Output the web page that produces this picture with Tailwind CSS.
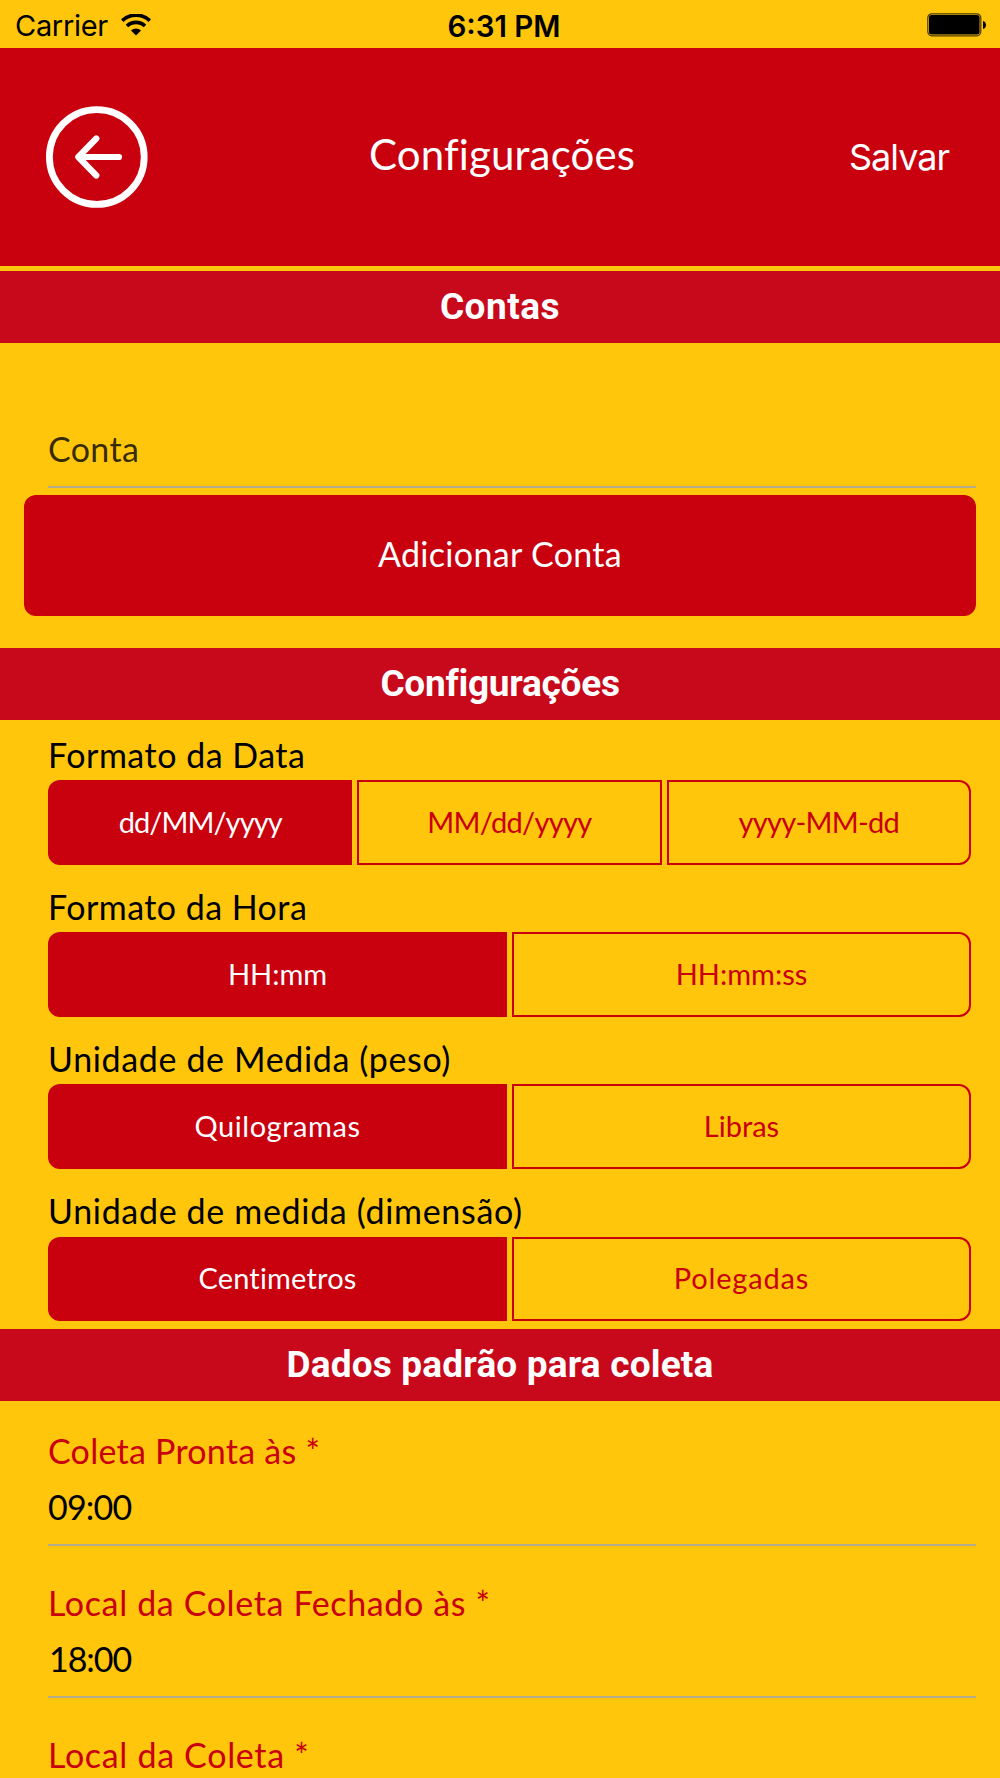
<!DOCTYPE html>
<html lang="pt-BR">
<head>
    <meta charset="UTF-8">
    <meta name="viewport" content="width=device-width, initial-scale=1.0">
    <title>Configurações</title>
    <script src="https://cdn.jsdelivr.net/npm/@tailwindcss/browser@4"></script>
</head>
<body class="bg-[#ffc60b]">
    <div class="w-[1000px] h-[1778px] overflow-hidden bg-[#ffc60b] font-['Lato',sans-serif] text-[34px] leading-10 text-black whitespace-nowrap">

        <!-- Status bar -->
        <div class="grid grid-cols-3 items-center h-12 pt-[3px] pl-[15px] pr-[14px] font-['Inter',sans-serif] text-[29px]">
            <div class="flex items-center gap-[13px]">
                <span class="tracking-[-0.3px]">Carrier</span>
                <svg class="w-[30px] h-[22px] -mt-[2px]" viewBox="0 0 30 22" fill="none" stroke="black" stroke-width="3.6">
                    <path d="M1.2 6.6a20 20 0 0 1 27.6 0"/>
                    <path d="M6 12a13 13 0 0 1 18 0"/>
                    <path d="M15 21.5l-5-5a7.2 7.2 0 0 1 10 0z" fill="black" stroke="none"/>
                </svg>
            </div>
            <span class="text-center font-semibold text-[29.5px] pl-[7px]">6:31 PM</span>
            <svg class="justify-self-end w-[59px] h-[24px] -mt-px" viewBox="0 0 59 24">
                <rect x=".8" y=".8" width="53" height="22" rx="4" fill="none" stroke="black" stroke-opacity=".7" stroke-width="1.2"/>
                <rect x="2" y="2" width="50.6" height="19.6" rx="2.5"/>
                <path d="M56 8c4 1 4 7 0 8z"/>
            </svg>
        </div>

        <!-- Header -->
        <header class="grid grid-cols-[1fr_auto_1fr] items-center h-[218px] pl-[46px] pr-[51px] bg-[#c9000e] text-white">
            <button>
                <svg class="w-[102px] h-[102px]" viewBox="0 0 102 102" fill="none" stroke="white" stroke-linecap="round" stroke-linejoin="round">
                    <circle cx="50.8" cy="51" r="47.4" stroke-width="6.8"/>
                    <path d="M50.3 32.5L32.3 51l18 18.5M33 51h40" stroke-width="6.2"/>
                </svg>
            </button>
            <h1 class="pb-[6px] pl-[9px] text-[42px] leading-[50px] tracking-[0.14px]">Configurações</h1>
            <button class="justify-self-end font-['Inter',sans-serif] text-[36px] tracking-[-1px]">Salvar</button>
        </header>

        <!-- Contas -->
        <h2 class="flex items-center justify-center h-[72px] mt-[5px] bg-[#c8081b] text-white text-[37px] font-bold font-['Roboto',sans-serif] tracking-[0.5px]">Contas</h2>
        <div class="flex items-end h-[145px] ml-12 mr-6 pb-[17px] border-b-2 border-[#b3ad8e] text-black/80 tracking-[0.36px]">Conta</div>
        <button class="block w-[952px] h-[121px] mx-6 mt-[7px] mb-8 pb-[3px] rounded-xl bg-[#c9000e] text-white tracking-[0.33px]">Adicionar Conta</button>

        <!-- Configurações -->
        <h2 class="flex items-center justify-center h-[72px] bg-[#c8081b] text-white text-[37px] font-bold font-['Roboto',sans-serif] tracking-[-0.26px]">Configurações</h2>
        <div class="pl-12 pr-[29px]">
            <div class="h-[152.2px]">
                <div class="flex items-center h-[60px] pt-[10px] tracking-[0.5px]">Formato da Data</div>
                <div class="grid grid-cols-3 gap-[5px] h-[84.5px] text-[29px]">
                    <button class="pb-px rounded-l-xl bg-[#c9000e] text-white tracking-[-0.93px]">dd/MM/yyyy</button>
                    <button class="pb-px border-2 border-[#c9000e] text-[#c9000e] tracking-[-0.67px]">MM/dd/yyyy</button>
                    <button class="pb-px border-2 border-[#c9000e] rounded-r-xl text-[#c9000e] tracking-[-0.72px]">yyyy-MM-dd</button>
                </div>
            </div>
            <div class="h-[152.2px]">
                <div class="flex items-center h-[60px] pt-[10px] tracking-[0.45px]">Formato da Hora</div>
                <div class="grid grid-cols-2 gap-[5px] h-[84.5px] text-[29px]">
                    <button class="pb-px rounded-l-xl bg-[#c9000e] text-white">HH:mm</button>
                    <button class="pb-px border-2 border-[#c9000e] rounded-r-xl text-[#c9000e]">HH:mm:ss</button>
                </div>
            </div>
            <div class="h-[152.2px]">
                <div class="flex items-center h-[60px] pt-[10px] tracking-[0.64px]">Unidade de Medida (peso)</div>
                <div class="grid grid-cols-2 gap-[5px] h-[84.5px] text-[29px]">
                    <button class="pb-px rounded-l-xl bg-[#c9000e] text-white tracking-[0.56px]">Quilogramas</button>
                    <button class="pb-px border-2 border-[#c9000e] rounded-r-xl text-[#c9000e]">Libras</button>
                </div>
            </div>
            <div class="h-[152.2px]">
                <div class="flex items-center h-[60px] pt-[9px] tracking-[0.67px]">Unidade de medida (dimensão)</div>
                <div class="grid grid-cols-2 gap-[5px] h-[84.5px] text-[29px]">
                    <button class="pb-px rounded-l-xl bg-[#c9000e] text-white tracking-[0.19px]">Centimetros</button>
                    <button class="pb-px border-2 border-[#c9000e] rounded-r-xl text-[#c9000e] tracking-[0.83px]">Polegadas</button>
                </div>
            </div>
        </div>

        <!-- Dados padrão para coleta -->
        <h2 class="flex items-center justify-center h-[72.2px] bg-[#c8081b] text-white text-[37px] font-bold font-['Roboto',sans-serif] tracking-[0.17px]">Dados padrão para coleta</h2>
        <div class="flex flex-col gap-[7.2px] pl-12 pr-6 leading-[56px]">
            <div class="h-[145px] pt-[22px] border-b-2 border-[#b3ad8e]">
                <div class="text-[#c9000e] tracking-[0.25px]">Coleta Pronta às *</div>
                <div class="tracking-[-0.79px]">09:00</div>
            </div>
            <div class="h-[145px] pt-[22px] border-b-2 border-[#b3ad8e]">
                <div class="text-[#c9000e] tracking-[0.63px]">Local da Coleta Fechado às *</div>
                <div class="pl-px tracking-[-1.04px]">18:00</div>
            </div>
            <div class="pt-[22px]">
                <div class="text-[#c9000e] tracking-[0.68px]">Local da Coleta *</div>
            </div>
        </div>
    </div>
</body>
</html>
